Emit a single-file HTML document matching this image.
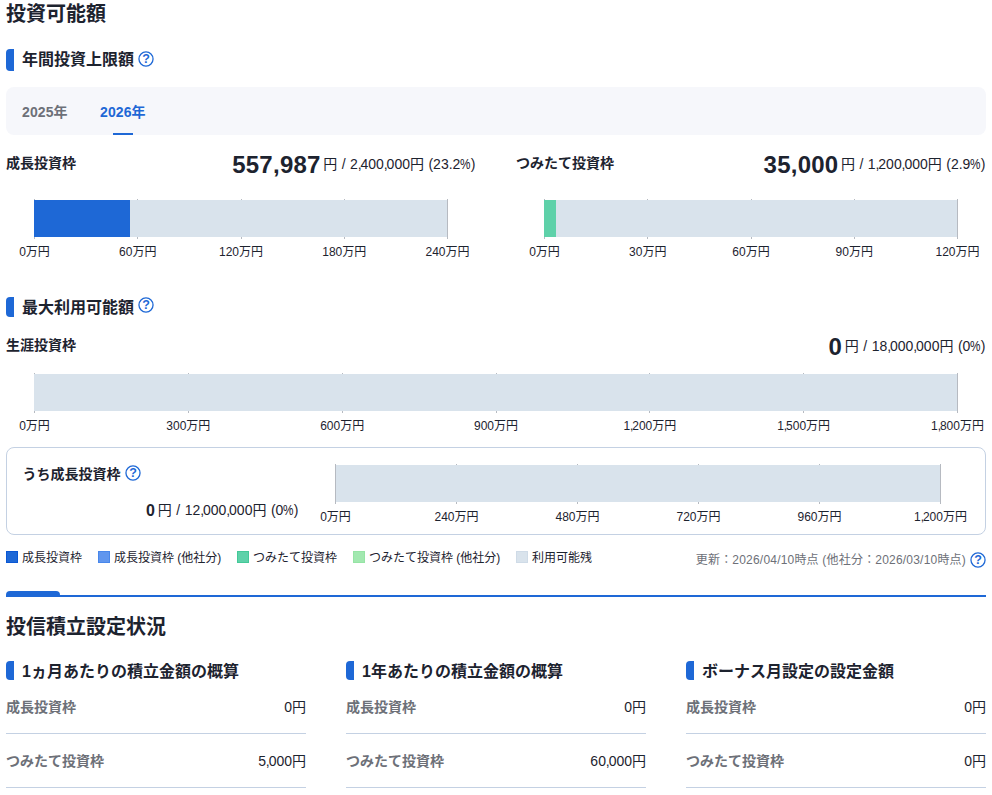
<!DOCTYPE html>
<html lang="ja">
<head>
<meta charset="utf-8">
<title>投資可能額</title>
<style>
*{box-sizing:border-box;margin:0;padding:0}
html,body{width:992px;height:795px;overflow:hidden;background:#fff}
body{font-family:"Liberation Sans","Noto Sans CJK JP",sans-serif;color:#1d232f;position:relative;font-size:14px}
h1,h2{position:absolute;white-space:nowrap;font-size:20px;font-weight:700;line-height:28px;left:6px;color:#1d232f}
.sec{position:absolute;white-space:nowrap;font-size:16px;font-weight:700;line-height:24px;color:#1d232f;left:22px}
.sbar{position:absolute;width:8px;background:#1e68d6;border-radius:4px 0 0 4px}
.help{position:absolute;width:16px;height:16px}
.tabs{position:absolute;left:6px;top:87px;width:980px;height:48px;background:#f6f7fb;border-radius:8px}
.tab{position:absolute;top:13px;font-size:14px;font-weight:700;line-height:24px;color:#6d7078;letter-spacing:.1px}
.tab.on{color:#1e68d6}
.tab.on:after{content:"";position:absolute;left:13px;bottom:-11px;width:20px;height:2px;background:#1e68d6}
.lbl{position:absolute;white-space:nowrap;font-size:14px;font-weight:700;line-height:20px;color:#1d232f}
.amt{position:absolute;white-space:nowrap;font-size:14px;line-height:32px;text-align:right;color:#1d232f}
.amt b{font-weight:700;position:relative}
.amt span{position:relative;word-spacing:.6px}
i.c{font-style:normal;letter-spacing:-1.1px;margin-left:-.1px}
i.p{font-style:normal;display:inline-block;transform:scaleX(.84);margin:0 -1px}
.bar{position:absolute;height:37px;background:#d9e3ec}
.bar i{position:absolute;left:0;top:0;height:100%;display:block}
.tick{position:absolute;width:1px;height:40px;background:#b6bac1}
.ax{position:absolute;white-space:nowrap;font-size:12px;line-height:16px;color:#1d232f;transform:translateX(-50%)}
.box{position:absolute;left:6px;top:447px;width:980px;height:88px;border:1px solid #c4d1e3;border-radius:8px}
.leg{position:absolute;white-space:nowrap;top:550px;font-size:12px;line-height:16px;color:#1d232f;padding-left:16px}
.leg:before{content:"";position:absolute;left:0;top:1px;width:12px;height:12px;background:var(--c);border:1px solid var(--b);box-sizing:border-box}
.upd{position:absolute;white-space:nowrap;font-size:12px;line-height:16px;color:#6d7078;letter-spacing:.2px}
.hr{position:absolute;left:6px;top:595px;width:980px;height:2px;background:#1e68d6}
.hrtab{position:absolute;left:6px;top:591px;width:54px;height:6px;background:#1e68d6;border-radius:4px 4px 0 0}
.row{position:absolute;width:300px;height:54px;border-bottom:1px solid #c4d1e3;font-size:14px;line-height:20px}
.row span{position:absolute;left:0;top:17px;font-weight:700;color:#6d7078}
.row em{position:absolute;right:0;top:17px;font-style:normal;color:#1d232f}
</style>
</head>
<body>
<h1 style="top:0px">投資可能額</h1>
<div class="sbar" style="left:6px;top:49px;height:22px"></div><div class="sec" style="top:47.5px">年間投資上限額</div>
<svg class="help" style="left:138.2px;top:51.0px" viewBox="0 0 16 16"><circle cx="8" cy="8" r="7.05" fill="none" stroke="#1e68d6" stroke-width="1.3"/><text x="8" y="12.45" font-size="12.5" font-weight="700" text-anchor="middle" fill="#1e68d6" font-family="Liberation Sans, sans-serif">?</text></svg>
<div class="tabs"><div class="tab" style="left:16px">2025年</div><div class="tab on" style="left:94px">2026年</div></div>
<div class="lbl" style="left:6px;top:153px">成長投資枠</div>
<div class="amt" style="right:516.5px;top:148px"><b style="font-size:24px;top:0.6px;letter-spacing:0.25px;margin-right:2.5px">557,987</b><span style="top:-3.3px">円 / 2<i class="c">,</i>400<i class="c">,</i>000円 (23.2<i class="p">%</i>)</span></div>
<div class="tick" style="left:34.00px;top:199px"></div>
<div class="ax" style="left:34.50px;top:244px">0万円</div>
<div class="tick" style="left:137.25px;top:199px"></div>
<div class="ax" style="left:137.75px;top:244px">60万円</div>
<div class="tick" style="left:240.50px;top:199px"></div>
<div class="ax" style="left:241.00px;top:244px">120万円</div>
<div class="tick" style="left:343.75px;top:199px"></div>
<div class="ax" style="left:344.25px;top:244px">180万円</div>
<div class="tick" style="left:447.00px;top:199px"></div>
<div class="ax" style="left:447.50px;top:244px">240万円</div>
<div class="bar" style="left:34px;top:200px;width:413px"><i style="width:96px;background:#1e68d6"></i></div>
<div class="lbl" style="left:516px;top:153px">つみたて投資枠</div>
<div class="amt" style="right:6.5px;top:148px"><b style="font-size:24px;top:0.6px;letter-spacing:0.25px;margin-right:2.5px">35,000</b><span style="top:-3.3px">円 / 1<i class="c">,</i>200<i class="c">,</i>000円 (2.9<i class="p">%</i>)</span></div>
<div class="tick" style="left:544.00px;top:199px"></div>
<div class="ax" style="left:544.50px;top:244px">0万円</div>
<div class="tick" style="left:647.25px;top:199px"></div>
<div class="ax" style="left:647.75px;top:244px">30万円</div>
<div class="tick" style="left:750.50px;top:199px"></div>
<div class="ax" style="left:751.00px;top:244px">60万円</div>
<div class="tick" style="left:853.75px;top:199px"></div>
<div class="ax" style="left:854.25px;top:244px">90万円</div>
<div class="tick" style="left:957.00px;top:199px"></div>
<div class="ax" style="left:957.50px;top:244px">120万円</div>
<div class="bar" style="left:544px;top:200px;width:413px"><i style="width:12px;background:#5ed1a9"></i></div>
<div class="sbar" style="left:6px;top:297px;height:20px"></div><div class="sec" style="top:296px">最大利用可能額</div>
<svg class="help" style="left:138.2px;top:297.0px" viewBox="0 0 16 16"><circle cx="8" cy="8" r="7.05" fill="none" stroke="#1e68d6" stroke-width="1.3"/><text x="8" y="12.45" font-size="12.5" font-weight="700" text-anchor="middle" fill="#1e68d6" font-family="Liberation Sans, sans-serif">?</text></svg>
<div class="lbl" style="left:6px;top:335px">生涯投資枠</div>
<div class="amt" style="right:6.5px;top:331px"><b style="font-size:24px;top:-0.5px;letter-spacing:0px;margin-right:3px">0</b><span style="top:-4.3px">円 / 18<i class="c">,</i>000<i class="c">,</i>000円 (0<i class="p">%</i>)</span></div>
<div class="tick" style="left:34.00px;top:373px"></div>
<div class="ax" style="left:34.50px;top:418px">0万円</div>
<div class="tick" style="left:187.83px;top:373px"></div>
<div class="ax" style="left:188.33px;top:418px">300万円</div>
<div class="tick" style="left:341.67px;top:373px"></div>
<div class="ax" style="left:342.17px;top:418px">600万円</div>
<div class="tick" style="left:495.50px;top:373px"></div>
<div class="ax" style="left:496.00px;top:418px">900万円</div>
<div class="tick" style="left:649.33px;top:373px"></div>
<div class="ax" style="left:649.83px;top:418px">1<i class="c">,</i>200万円</div>
<div class="tick" style="left:803.17px;top:373px"></div>
<div class="ax" style="left:803.67px;top:418px">1<i class="c">,</i>500万円</div>
<div class="tick" style="left:957.00px;top:373px"></div>
<div class="ax" style="left:957.50px;top:418px">1<i class="c">,</i>800万円</div>
<div class="bar" style="left:34px;top:374px;width:923px"></div>
<div class="box"></div>
<div class="lbl" style="left:22.5px;top:463.5px">うち成長投資枠</div>
<svg class="help" style="left:125.2px;top:464.9px" viewBox="0 0 16 16"><circle cx="8" cy="8" r="7.05" fill="none" stroke="#1e68d6" stroke-width="1.3"/><text x="8" y="12.45" font-size="12.5" font-weight="700" text-anchor="middle" fill="#1e68d6" font-family="Liberation Sans, sans-serif">?</text></svg>
<div class="amt" style="right:693.5px;top:494px"><b style="font-size:16px;top:0.5px;letter-spacing:0px;margin-right:3px">0</b><span style="top:0px">円 / 12<i class="c">,</i>000<i class="c">,</i>000円 (0<i class="p">%</i>)</span></div>
<div class="tick" style="left:335.00px;top:464px"></div>
<div class="ax" style="left:335.50px;top:509px">0万円</div>
<div class="tick" style="left:456.00px;top:464px"></div>
<div class="ax" style="left:456.50px;top:509px">240万円</div>
<div class="tick" style="left:577.00px;top:464px"></div>
<div class="ax" style="left:577.50px;top:509px">480万円</div>
<div class="tick" style="left:698.00px;top:464px"></div>
<div class="ax" style="left:698.50px;top:509px">720万円</div>
<div class="tick" style="left:819.00px;top:464px"></div>
<div class="ax" style="left:819.50px;top:509px">960万円</div>
<div class="tick" style="left:940.00px;top:464px"></div>
<div class="ax" style="left:940.50px;top:509px">1<i class="c">,</i>200万円</div>
<div class="bar" style="left:336px;top:465px;width:604px"></div>
<div class="leg" style="left:6px;--c:#1e68d6;--b:#0a57d4">成長投資枠</div>
<div class="leg" style="left:98px;--c:#6096ee;--b:#4887eb">成長投資枠 (他社分)</div>
<div class="leg" style="left:237px;--c:#5ed1a9;--b:#43c998">つみたて投資枠</div>
<div class="leg" style="left:353px;--c:#a2e8b0;--b:#96e4a5">つみたて投資枠 (他社分)</div>
<div class="leg" style="left:516px;--c:#d9e3ec;--b:#cfdbe7">利用可能残</div>
<div class="upd" style="right:26px;top:551.7px">更新：2026/04/10時点 (他社分：2026/03/10時点)</div>
<svg class="help" style="left:970.0px;top:552.2px" viewBox="0 0 16 16"><circle cx="8" cy="8" r="7.05" fill="none" stroke="#1e68d6" stroke-width="1.3"/><text x="8" y="12.45" font-size="12.5" font-weight="700" text-anchor="middle" fill="#1e68d6" font-family="Liberation Sans, sans-serif">?</text></svg>
<div class="hr"></div><div class="hrtab"></div>
<h2 style="top:612.5px">投信積立設定状況</h2>
<div class="sbar" style="left:6px;top:661px;height:19px"></div><div class="sec" style="left:22px;top:659.5px">1ヵ月あたりの積立金額の概算</div>
<div class="sbar" style="left:346px;top:661px;height:19px"></div><div class="sec" style="left:362px;top:659.5px">1年あたりの積立金額の概算</div>
<div class="sbar" style="left:686px;top:661px;height:19px"></div><div class="sec" style="left:702px;top:659.5px">ボーナス月設定の設定金額</div>
<div class="row" style="left:6px;top:680px"><span>成長投資枠</span><em>0円</em></div>
<div class="row" style="left:6px;top:734px"><span>つみたて投資枠</span><em>5<i class="c">,</i>000円</em></div>
<div class="row" style="left:346px;top:680px"><span>成長投資枠</span><em>0円</em></div>
<div class="row" style="left:346px;top:734px"><span>つみたて投資枠</span><em>60<i class="c">,</i>000円</em></div>
<div class="row" style="left:686px;top:680px"><span>成長投資枠</span><em>0円</em></div>
<div class="row" style="left:686px;top:734px"><span>つみたて投資枠</span><em>0円</em></div>
</body>
</html>
